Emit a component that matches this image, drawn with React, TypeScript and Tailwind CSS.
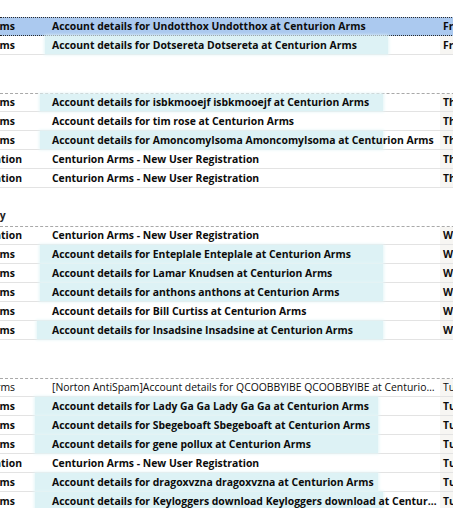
import React from 'react';

type Row = {
  from: 'arms' | 'reg';
  subject: string;
  date: string;
  hl?: [number, number];
  read?: boolean;
  selected?: boolean;
};

type Group = { label: string; rows: Row[] };

const acct = (name: string) => `Account details for ${name} ${name} at Centurion Arms`;
const reg = 'Centurion Arms - New User Registration';

const groups: Group[] = [
  {
    label: 'Friday',
    rows: [
      { from: 'arms', subject: acct('Undotthox'), date: 'Fri 3/13/2009', selected: true },
      { from: 'arms', subject: acct('Dotsereta'), date: 'Fri 3/13/2009', hl: [45, 388] },
    ],
  },
  {
    label: 'Thursday',
    rows: [
      { from: 'arms', subject: acct('isbkmooejf'), date: 'Thu 3/12/2009', hl: [40, 383] },
      { from: 'arms', subject: 'Account details for tim rose at Centurion Arms', date: 'Thu 3/12/2009' },
      { from: 'arms', subject: acct('AmoncomyIsoma'), date: 'Thu 3/12/2009', hl: [40, 383] },
      { from: 'reg', subject: reg, date: 'Thu 3/12/2009' },
      { from: 'reg', subject: reg, date: 'Thu 3/12/2009' },
    ],
  },
  {
    label: 'Wednesday',
    rows: [
      { from: 'reg', subject: reg, date: 'Wed 3/11/2009' },
      { from: 'arms', subject: acct('Enteplale'), date: 'Wed 3/11/2009', hl: [40, 383] },
      { from: 'arms', subject: 'Account details for Lamar Knudsen at Centurion Arms', date: 'Wed 3/11/2009', hl: [40, 383] },
      { from: 'arms', subject: acct('anthons'), date: 'Wed 3/11/2009', hl: [40, 383] },
      { from: 'arms', subject: 'Account details for Bill Curtiss at Centurion Arms', date: 'Wed 3/11/2009' },
      { from: 'arms', subject: acct('Insadsine'), date: 'Wed 3/11/2009', hl: [37, 383] },
    ],
  },
  {
    label: 'Tuesday',
    rows: [
      { from: 'arms', subject: '[Norton AntiSpam]Account details for QCOOBBYIBE QCOOBBYIBE at Centurion Arms', date: 'Tue 3/10/2009', read: true },
      { from: 'arms', subject: acct('Lady Ga Ga'), date: 'Tue 3/10/2009', hl: [35, 378] },
      { from: 'arms', subject: acct('Sbegeboaft'), date: 'Tue 3/10/2009', hl: [35, 378] },
      { from: 'arms', subject: 'Account details for gene pollux at Centurion Arms', date: 'Tue 3/10/2009', hl: [35, 378] },
      { from: 'reg', subject: reg, date: 'Tue 3/10/2009' },
      { from: 'arms', subject: acct('dragoxvzna'), date: 'Tue 3/10/2009', hl: [35, 378] },
      { from: 'arms', subject: acct('Keyloggers download'), date: 'Tue 3/10/2009', hl: [35, 383] },
    ],
  },
];

function MailRow({ row, first }: { row: Row; first: boolean }) {
  const border = row.selected
    ? 'border-y border-dotted border-[#2b2b2b] bg-[#abc9ef]'
    : first
      ? 'border-t border-b border-dashed border-t-[#a9a9a9] border-b-[#e3e3e3]'
      : 'border-b border-[#e3e3e3]';
  const weight = row.read ? 'font-normal' : 'font-bold';
  const hlStart = row.hl ? row.hl[0] - 40 : 0;
  const hlWidth = row.hl ? row.hl[1] - row.hl[0] : 0;

  return (
    <div
      className={`flex h-[19px] w-[520px] items-stretch text-[10.4px] text-[#0c0c0c] ${weight} ${border}`}
      style={first && !row.selected ? { borderBottomStyle: 'solid' } : undefined}
    >
      <div className="flex w-[40px] shrink-0 items-center justify-end overflow-hidden whitespace-nowrap pt-px">
        <span className={row.from === 'arms' ? 'pr-[25px]' : 'pr-[18px]'}>
          {row.from === 'arms' ? 'Centurion Arms' : 'Administration'}
        </span>
      </div>
      <div className="relative flex w-[400px] shrink-0 items-center pt-px">
        {row.hl && (
          <div
            className="absolute inset-y-0 bg-[#ddf2f5] shadow-[0_0_3px_1px_#e4f5f7]"
            style={{ left: hlStart, width: hlWidth }}
          />
        )}
        <span className="relative block w-[398px] truncate pl-[12px]">{row.subject}</span>
      </div>
      <div
        className={`flex flex-1 items-center whitespace-nowrap pl-[3px] pt-px ${
          row.selected ? 'bg-[#abc9ef]' : 'bg-[#f7f6f3]'
        }`}
      >
        {row.date}
      </div>
    </div>
  );
}

export default function App() {
  return (
    <div className="h-[508px] w-[453px] overflow-hidden bg-white font-['Open_Sans','Liberation_Sans',sans-serif]">
      <div className="mt-[-21px]">
        {groups.map((g) => (
          <div key={g.label}>
            <div className="flex h-[38px] items-end pb-[2px]">
              <div className="w-[9px] overflow-hidden whitespace-nowrap text-[10.4px] font-bold text-[#222]">
                <span className="ml-[-54px] block">{g.label}</span>
              </div>
            </div>
            {g.rows.map((r, i) => (
              <MailRow key={i} row={r} first={i === 0} />
            ))}
          </div>
        ))}
      </div>
    </div>
  );
}
